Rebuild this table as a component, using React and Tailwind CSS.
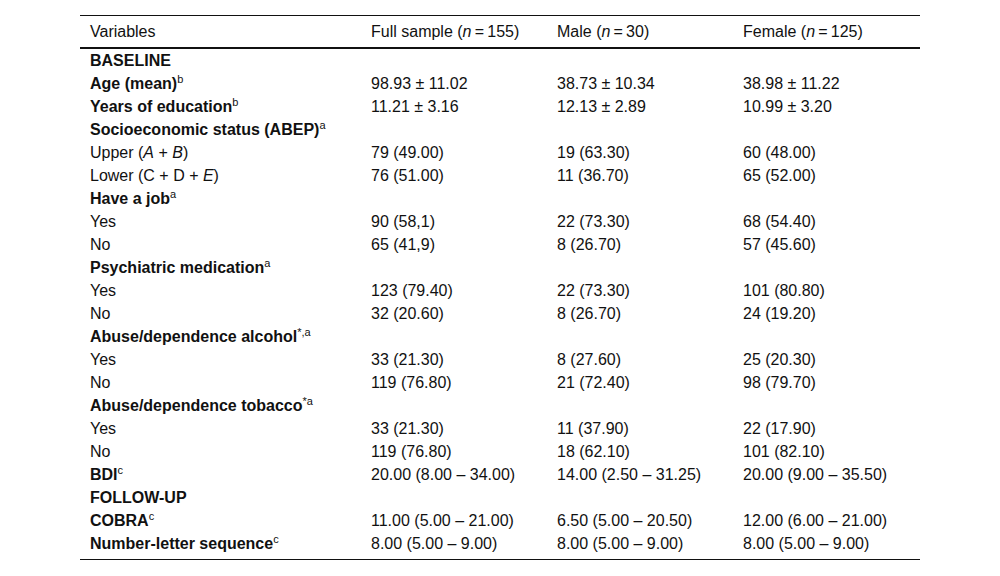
import React from "react";

const S = ({ children }) => (
  <sup className="text-[11px] font-normal leading-none">{children}</sup>
);
const I = ({ children }) => <i>{children}</i>;

const rows = [
  { label: "BASELINE", bold: true },
  { label: <>Age (mean)<S>b</S></>, bold: true, v: ["98.93 ± 11.02", "38.73 ± 10.34", "38.98 ± 11.22"] },
  { label: <>Years of education<S>b</S></>, bold: true, v: ["11.21 ± 3.16", "12.13 ± 2.89", "10.99 ± 3.20"] },
  { label: <>Socioeconomic status (ABEP)<S>a</S></>, bold: true },
  { label: <>Upper (<I>A</I> + <I>B</I>)</>, v: ["79 (49.00)", "19 (63.30)", "60 (48.00)"] },
  { label: <>Lower (C + D + <I>E</I>)</>, v: ["76 (51.00)", "11 (36.70)", "65 (52.00)"] },
  { label: <>Have a job<S>a</S></>, bold: true },
  { label: "Yes", v: ["90 (58,1)", "22 (73.30)", "68 (54.40)"] },
  { label: "No", v: ["65 (41,9)", "8 (26.70)", "57 (45.60)"] },
  { label: <>Psychiatric medication<S>a</S></>, bold: true },
  { label: "Yes", v: ["123 (79.40)", "22 (73.30)", "101 (80.80)"] },
  { label: "No", v: ["32 (20.60)", "8 (26.70)", "24 (19.20)"] },
  { label: <>Abuse/dependence alcohol<S>*,a</S></>, bold: true },
  { label: "Yes", v: ["33 (21.30)", "8 (27.60)", "25 (20.30)"] },
  { label: "No", v: ["119 (76.80)", "21 (72.40)", "98 (79.70)"] },
  { label: <>Abuse/dependence tobacco<S>*a</S></>, bold: true },
  { label: "Yes", v: ["33 (21.30)", "11 (37.90)", "22 (17.90)"] },
  { label: "No", v: ["119 (76.80)", "18 (62.10)", "101 (82.10)"] },
  { label: <>BDI<S>c</S></>, bold: true, v: ["20.00 (8.00 – 34.00)", "14.00 (2.50 – 31.25)", "20.00 (9.00 – 35.50)"] },
  { label: "FOLLOW-UP", bold: true },
  { label: <>COBRA<S>c</S></>, bold: true, v: ["11.00 (5.00 – 21.00)", "6.50 (5.00 – 20.50)", "12.00 (6.00 – 21.00)"] },
  { label: <>Number-letter sequence<S>c</S></>, bold: true, v: ["8.00 (5.00 – 9.00)", "8.00 (5.00 – 9.00)", "8.00 (5.00 – 9.00)"] },
];

export default function App() {
  return (
    <div
      className="w-[1000px] h-[576px] bg-white pt-[15px] text-[#111]"
      style={{ fontFamily: '"Liberation Sans", Arial, sans-serif' }}
    >
      <table className="mx-auto w-[840px] table-fixed border-collapse text-[16px]">
        <colgroup>
          <col className="w-[281px]" />
          <col className="w-[186px]" />
          <col className="w-[186px]" />
          <col className="w-[187px]" />
        </colgroup>
        <thead>
          <tr className="h-[32px] border-t border-t-[#111] border-b-2 border-b-[#111]">
            <th className="text-left font-normal pl-[10px] pt-[1px] leading-[20px]">Variables</th>
            <th className="text-left font-normal pl-[10px] pt-[1px] leading-[20px]">
              Full sample (<I>n</I>{"\u2009=\u2009"}155)
            </th>
            <th className="text-left font-normal pl-[10px] pt-[1px] leading-[20px]">
              Male (<I>n</I>{"\u2009=\u2009"}30)
            </th>
            <th className="text-left font-normal pl-[10px] pt-[1px] leading-[20px]">
              Female (<I>n</I>{"\u2009=\u2009"}125)
            </th>
          </tr>
        </thead>
        <tbody className="border-b border-b-[#111]">
          {rows.map((r, i) => (
            <tr key={i} className="h-[23px]">
              <td className={`pl-[10px] leading-[23px] p-0 whitespace-nowrap ${r.bold ? "font-bold" : ""}`}>
                {r.label}
              </td>
              {[0, 1, 2].map((j) => (
                <td key={j} className="pl-[10px] leading-[23px] p-0 whitespace-nowrap">
                  {r.v ? r.v[j] : ""}
                </td>
              ))}
            </tr>
          ))}
          <tr className="h-[5px]">
            <td colSpan={4}></td>
          </tr>
        </tbody>
      </table>
    </div>
  );
}
